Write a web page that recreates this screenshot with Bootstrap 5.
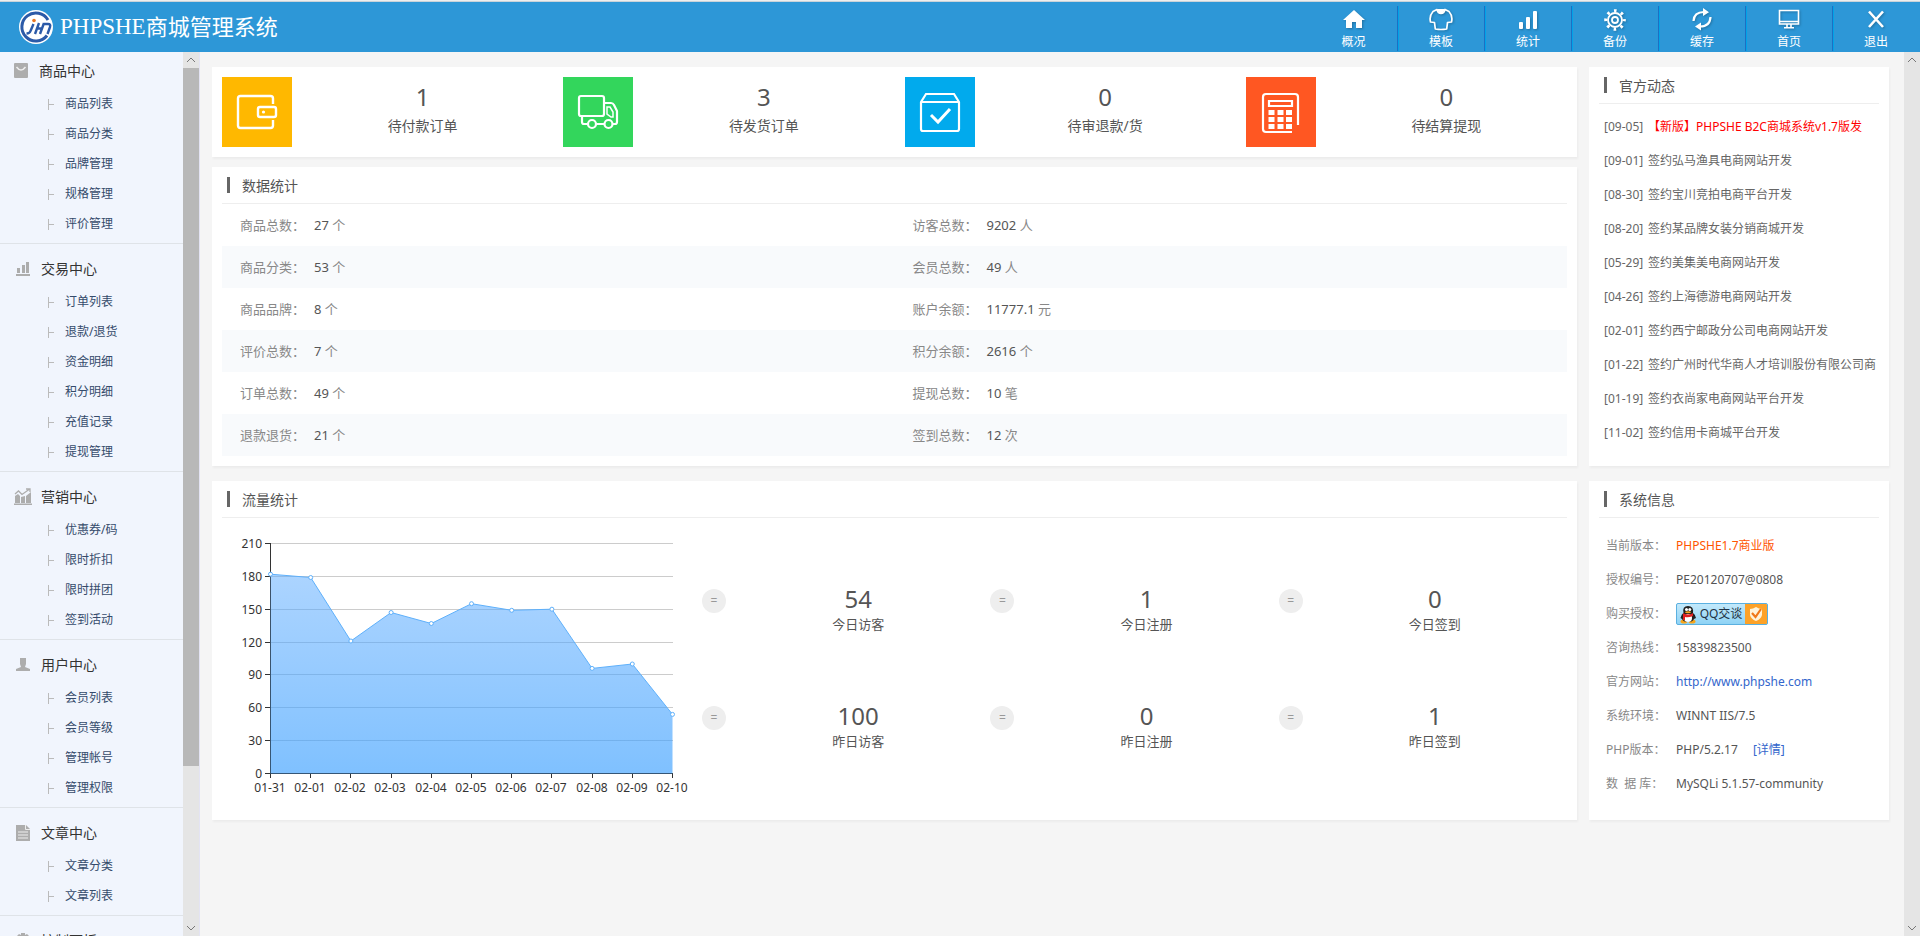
<!DOCTYPE html>
<html lang="zh-CN">
<head>
<meta charset="utf-8">
<meta name="viewport" content="width=device-width, initial-scale=1">
<title>PHPSHE商城管理系统</title>
<link href="https://cdn.jsdelivr.net/npm/bootstrap@5.3.0/dist/css/bootstrap.min.css" rel="stylesheet">
<style>
body{font-family:"Noto Sans","Noto Sans CJK SC",sans-serif;font-size:12px;color:#555;background:#f5f5f5;height:100vh;overflow:hidden}
a{text-decoration:none;color:inherit}
ul{list-style:none;margin:0;padding:0}
.topbar{height:52px;background:#2d97d7;border-top:1px solid #eee;box-shadow:inset 0 1px #c9d3da;color:#fff}
.brand{gap:6px;padding-left:18px;font-size:22px;color:#fff}
.brand b{font:400 23px "Liberation Serif",serif}
.topnav a{width:87px;margin:5px 0 4px;padding:1px 2px 0 0;line-height:18px;color:#fff}
.topnav li+li a{border-left:1px solid #00a3e8;box-shadow:-1px 0 #1c6fc4}
.topnav svg{width:26px;height:26px;filter:drop-shadow(1px 1px 1px rgba(0,0,0,.25))}
.side{width:183px;background:#f1f5fd}
.side section{padding:8px 0 5px;border-bottom:1px solid #dfe3e8}
.side section:first-child{padding-top:2px}
.side h2{font-size:14px;font-weight:400;line-height:34px;color:#333;gap:7px;padding-left:14px;margin:0}
.side h2 svg{width:20px;height:18px}
.side section:first-child h2{gap:5px}
.side li a{display:flex;align-items:center;height:30px;padding:2px 0 0 48px;color:#354b6b}
.side li a::before{content:"";width:1px;height:11px;background:#bbb}
.side li a::after{content:"";order:1;width:5px;height:1px;background:#bbb}
.side li span{order:2;margin-left:11px}
.sbar{width:16px;background:#e5e5e5}
.sbar svg{width:16px;height:16px;flex:none}
.thumb{height:79%;background:#b8b8b8;margin-bottom:auto}
.edge{border-right:1px solid #e3e3f3;width:17px}
.content{padding:15px 15px 0 12px;gap:15px}
.content>.d-flex{gap:12px}
.panel{background:#fff;box-shadow:1px 2px 2px rgba(0,0,0,.04);padding:10px 10px}
.aside{width:300px;flex:none}
.panel h3{font-size:14px;font-weight:400;line-height:16px;margin:0;padding:0 5px 10px;border-bottom:1px solid #eee}
.panel h3 span{display:block;border-left:3px solid #666;padding-left:12px;height:16px;line-height:17px}
.stats{padding:10px 0}
.tile{width:70px;height:70px;flex:none}
.big{font-size:24px;line-height:30px}
.stats .txt{font-size:14px;line-height:20px;padding-top:5px}
.stats .lbl{font-size:14px;line-height:20px;padding-top:11px}
.stats a{padding-left:10px}
.tbl{font-size:13px;margin:0;color:#555}
.tbl td{width:50%;height:42px;padding:1px 18px 0;vertical-align:middle}
.tbl span{display:inline-block;width:74px;color:#888}
.tbl tr:nth-child(even){background:#f8fafc}
.tbl i{font-style:normal;color:#888}
.news{padding-top:6px}
.news a{display:block;line-height:34px;padding-left:5px;white-space:nowrap;overflow:hidden;color:#666}
.news time{display:inline-block;width:44px}
.news b{font-weight:400;color:#f00}
.info{margin:11px 0 0;width:100%}
.info th{width:77px;height:34px;padding:0 0 0 7px;font-weight:400;color:#888;white-space:pre}
.info td{padding:0}
.info a{color:#36c}
.info .more{margin-left:12px}
.chart{width:480px;height:298px;flex:none}
.chart text{font-size:12px;fill:#333}
.flow{padding-bottom:4px}
.counts{margin-top:60px}
.counts>div{height:117px}
.eq{width:24px;height:24px;border-radius:50%;background:#eee;color:#999;flex:none;margin-top:11px}
.counts .txt{font-size:13px;line-height:20px}
.counts .big{padding-top:6px}
.qq{width:92px;height:22px;border:1px solid #5bb0e0;border-radius:2px;background:linear-gradient(#c3e9fb,#8fd3f5);overflow:hidden}
.info .qq{color:#234}
</style>
</head>
<body class="d-flex flex-column">
<header class="topbar d-flex justify-content-between flex-shrink-0">
  <a href="#" class="brand d-flex align-items-center">
    <svg width="36" height="36" viewBox="0 0 36 36"><circle cx="18" cy="18" r="17" fill="#fff"/><path d="M30 11A14 14 0 1 0 29 26.500" fill="none" stroke="#2b5aa8" stroke-width="3"/><circle cx="16" cy="11.500" r="1.800" fill="#e87722"/><path d="M15.500 15l-3 7q-.8 2.500-4 2.500M21 14l-4 11M19.500 19.500h5M26 14l-4 11M26 15h4q3 0 2 3l-2.500 7" fill="none" stroke="#2b5aa8" stroke-width="2.400"/></svg>
    <span class="d-flex align-items-center"><b>PHPSHE</b>商城管理系统</span>
  </a>
  <ul class="topnav d-flex text-center">
    <li><a href="#" class="d-flex flex-column align-items-center"><svg viewBox="0 0 26 26"><path fill="#fff" d="M13 3L2 13h3v8h6v-6h4v6h6v-8h3z"/></svg>概况</a></li>
    <li><a href="#" class="d-flex flex-column align-items-center"><svg viewBox="0 0 26 26"><path fill="none" stroke="#fff" stroke-width="1.700" stroke-linejoin="round" d="M9 2.500L5 4.500Q1 9 2.500 15l4 .5.8 6.500q5.700 1 11.400 0l.8-6.500 4-.5Q25 9 21 4.500l-4-2q-1 4-4 4t-4-4z"/><path fill="#fff" d="M9 2h8l-2 4h-4z"/></svg>模板</a></li>
    <li><a href="#" class="d-flex flex-column align-items-center"><svg viewBox="0 0 26 26"><g fill="#fff"><rect x="4" y="15" width="4" height="7" rx="1"/><rect x="11" y="10" width="4" height="12" rx="1"/><rect x="18" y="4" width="4" height="18" rx="1"/></g></svg>统计</a></li>
    <li><a href="#" class="d-flex flex-column align-items-center"><svg viewBox="0 0 26 26" fill="none" stroke="#fff"><circle cx="13" cy="13" r="7" stroke-width="1.800"/><circle cx="13" cy="13" r="3" stroke-width="1.800"/><circle cx="13" cy="13" r="9.300" stroke-width="3" stroke-dasharray="2.600 4.704" stroke-dashoffset="1.300"/></svg>备份</a></li>
    <li><a href="#" class="d-flex flex-column align-items-center"><svg viewBox="0 0 26 26"><g fill="none" stroke="#fff" stroke-width="2.200"><path d="M4.500 14Q5 5 15 5M21.500 10Q21 19.500 11 19.500"/></g><path fill="#fff" d="M14 1l6 4.200L14 9zM12 15.500L6 19.500l6 4z"/></svg>缓存</a></li>
    <li><a href="#" class="d-flex flex-column align-items-center"><svg viewBox="0 0 26 26"><path fill="none" stroke="#fff" stroke-width="1.600" d="M3.500 3.500h19V17h-19zM3.500 14.500h19M11 17v3.500M15 17v3.500M8 20.700h10"/></svg>首页</a></li>
    <li><a href="#" class="d-flex flex-column align-items-center"><svg viewBox="0 0 26 26"><path fill="none" stroke="#fff" stroke-width="2.600" d="M6 4.500L20 20M20 4.500L6 20"/></svg>退出</a></li>
  </ul>
</header>
<div class="d-flex flex-grow-1 overflow-hidden">
  <nav class="side flex-shrink-0 overflow-hidden">
    <section><h2 class="d-flex align-items-center"><svg viewBox="0 0 20 18"><rect y="1" width="14" height="15" rx="1" fill="#adadad"/><path d="M2.500 5q4.500 6 9 0" fill="none" stroke="#eee" stroke-width="1.500"/></svg>商品中心</h2>
      <ul><li><a href="#"><span>商品列表</span></a></li><li><a href="#"><span>商品分类</span></a></li><li><a href="#"><span>品牌管理</span></a></li><li><a href="#"><span>规格管理</span></a></li><li><a href="#"><span>评价管理</span></a></li></ul></section>
    <section><h2 class="d-flex align-items-center"><svg viewBox="0 0 20 18"><path fill="#adadad" d="M2 14h14v2H2zM3 8h3v5H3zM8 5h3v8H8zM12 2h3v11h-3z"/></svg>交易中心</h2>
      <ul><li><a href="#"><span>订单列表</span></a></li><li><a href="#"><span>退款/退货</span></a></li><li><a href="#"><span>资金明细</span></a></li><li><a href="#"><span>积分明细</span></a></li><li><a href="#"><span>充值记录</span></a></li><li><a href="#"><span>提现管理</span></a></li></ul></section>
    <section><h2 class="d-flex align-items-center"><svg viewBox="0 0 20 18"><path fill="#adadad" d="M0 15.500h18v1.500H0zM1 8l3-2 2 2v7H1zM7 9l4-1v7H7zM12 8l5-4v11h-5z"/><path d="M1 6l3.500-3L8 6.500 15 1.500M12 1h4v3" fill="none" stroke="#adadad" stroke-width="1.300"/></svg>营销中心</h2>
      <ul><li><a href="#"><span>优惠券/码</span></a></li><li><a href="#"><span>限时折扣</span></a></li><li><a href="#"><span>限时拼团</span></a></li><li><a href="#"><span>签到活动</span></a></li></ul></section>
    <section><h2 class="d-flex align-items-center"><svg viewBox="0 0 20 18"><path fill="#adadad" d="M6 2h6v6l-1 3 5 2v2H2v-2l5-2-1-3z"/></svg>用户中心</h2>
      <ul><li><a href="#"><span>会员列表</span></a></li><li><a href="#"><span>会员等级</span></a></li><li><a href="#"><span>管理帐号</span></a></li><li><a href="#"><span>管理权限</span></a></li></ul></section>
    <section><h2 class="d-flex align-items-center"><svg viewBox="0 0 20 18"><path fill="#adadad" d="M2 1h10l4 4v12H2z"/><path d="M4 8h10M4 11h10M4 14h10M11.500 1v4.500H16" stroke="#eee" fill="none"/></svg>文章中心</h2>
      <ul><li><a href="#"><span>文章分类</span></a></li><li><a href="#"><span>文章列表</span></a></li></ul></section>
    <section><h2 class="d-flex align-items-center"><svg viewBox="0 0 20 18"><path fill="#adadad" d="M7 1h4v2l2-1 2 2-1 2h2v5h-2l1 2-2 2-2-1v2H7v-2l-2 1-2-2 1-2H2V6h2L3 4l2-2 2 1z"/></svg>控制面板</h2></section>
  </nav>
  <div class="sbar edge d-flex flex-column flex-shrink-0"><svg viewBox="0 0 16 16"><path d="M4 10l4-4 4 4" fill="none" stroke="#777"/></svg><div class="thumb"></div><svg viewBox="0 0 16 16"><path d="M4 6l4 4 4-4" fill="none" stroke="#777"/></svg></div>
  <main class="content d-flex flex-column flex-grow-1">
    <div class="d-flex">
      <div class="d-flex flex-column flex-grow-1" style="gap:10px">
        <div class="panel stats row g-0">
          <a href="#" class="col-3 d-flex"><svg class="tile" viewBox="0 0 70 70"><path fill="#ffb800" d="M0 0h70v70H0z"/><path d="M51 27V21.500q0-2.500-2.500-2.500h-30q-2.500 0-2.500 2.500v27q0 2.500 2.500 2.500h30q2.500 0 2.500-2.500V43M38 30h14q2 0 2 2v6q0 2-2 2H38q-2 0-2-2v-6q0-2 2-2z" fill="none" stroke="#fff" stroke-width="2.400"/><circle cx="41.500" cy="35" r="1.600" fill="#fff"/></svg><div class="flex-fill text-center txt"><div class="big">1</div><div class="lbl pt-0 mt-1">待付款订单</div></div></a>
          <a href="#" class="col-3 d-flex"><svg class="tile" viewBox="0 0 70 70"><path fill="#33d65c" d="M0 0h70v70H0z"/><g fill="none" stroke="#fff" stroke-width="2.200"><rect x="16" y="19" width="25" height="20" rx="2"/><path d="M41 26h7q2 0 3 2l3 6v11q0 2-2 2h-2M42 47h-8M24 47h-3q-2 0-2-2v-6"/><circle cx="29" cy="47" r="4"/><circle cx="45.500" cy="47" r="4"/><path d="M44 30h3l3 5v5h-2l-4-3z" stroke-width="1.500"/></g></svg><div class="flex-fill text-center txt"><div class="big">3</div><div class="lbl pt-0 mt-1">待发货订单</div></div></a>
          <a href="#" class="col-3 d-flex"><svg class="tile" viewBox="0 0 70 70"><path fill="#01aaed" d="M0 0h70v70H0z"/><path d="M16 25l5-8h28l5 8v27q0 2-2 2H18q-2 0-2-2zM16 25h38" fill="none" stroke="#fff" stroke-width="2.200"/><path d="M26 38l7 7 12-13" fill="none" stroke="#fff" stroke-width="3"/></svg><div class="flex-fill text-center txt"><div class="big">0</div><div class="lbl pt-0 mt-1">待审退款/货</div></div></a>
          <a href="#" class="col-3 d-flex"><svg class="tile" viewBox="0 0 70 70"><path fill="#ff5722" d="M0 0h70v70H0z"/><path d="M52 48V20q0-3-3-3H20q-3 0-3 3v32q0 3 3 3h26M23 24h23v5H23z" fill="none" stroke="#fff" stroke-width="2.200"/><path d="M25.500 33v20M34.500 33v20M43 33v20" stroke="#fff" stroke-width="6" stroke-dasharray="5 2"/></svg><div class="flex-fill text-center txt"><div class="big">0</div><div class="lbl pt-0 mt-1">待结算提现</div></div></a>
        </div>
        <section class="panel flex-grow-1"><h3><span>数据统计</span></h3>
          <table class="tbl w-100"><tbody>
            <tr><td><span>商品总数：</span>27 <i>个</i></td><td><span>访客总数：</span>9202 <i>人</i></td></tr>
            <tr><td><span>商品分类：</span>53 <i>个</i></td><td><span>会员总数：</span>49 <i>人</i></td></tr>
            <tr><td><span>商品品牌：</span>8 <i>个</i></td><td><span>账户余额：</span>11777.1 <i>元</i></td></tr>
            <tr><td><span>评价总数：</span>7 <i>个</i></td><td><span>积分余额：</span>2616 <i>个</i></td></tr>
            <tr><td><span>订单总数：</span>49 <i>个</i></td><td><span>提现总数：</span>10 <i>笔</i></td></tr>
            <tr><td><span>退款退货：</span>21 <i>个</i></td><td><span>签到总数：</span>12 <i>次</i></td></tr>
          </tbody></table></section>
      </div>
      <section class="panel aside"><h3><span>官方动态</span></h3>
        <ul class="news">
          <li><a href="#"><time>[09-05]</time><b>【新版】PHPSHE B2C商城系统v1.7版发</b></a></li>
          <li><a href="#"><time>[09-01]</time>签约弘马渔具电商网站开发</a></li>
          <li><a href="#"><time>[08-30]</time>签约宝川竞拍电商平台开发</a></li>
          <li><a href="#"><time>[08-20]</time>签约某品牌女装分销商城开发</a></li>
          <li><a href="#"><time>[05-29]</time>签约美集美电商网站开发</a></li>
          <li><a href="#"><time>[04-26]</time>签约上海德游电商网站开发</a></li>
          <li><a href="#"><time>[02-01]</time>签约西宁邮政分公司电商网站开发</a></li>
          <li><a href="#"><time>[01-22]</time>签约广州时代华商人才培训股份有限公司商</a></li>
          <li><a href="#"><time>[01-19]</time>签约衣尚家电商网站平台开发</a></li>
          <li><a href="#"><time>[11-02]</time>签约信用卡商城平台开发</a></li>
        </ul></section>
    </div>
    <div class="d-flex">
      <section class="panel flow flex-grow-1"><h3><span>流量统计</span></h3>
        <div class="d-flex">
          <svg class="chart" viewBox="0 0 480 298">
            <defs><linearGradient id="area" x1="0" y1="0" x2="0" y2="1"><stop offset="0" stop-color="#58a9ff" stop-opacity=".5"/><stop offset="1" stop-color="#3a9fff" stop-opacity=".65"/></linearGradient></defs>
            <path d="M49 25.500h402M49 58.500h402M49 91.500h402M49 124.500h402M49 156.500h402M49 189.500h402M49 222.500h402" stroke="#ccc"/>
            <path d="M48.500 25v231M43 25.500h5M43 58.500h5M43 91.500h5M43 124.500h5M43 156.500h5M43 189.500h5M43 222.500h5M43 255.500h408M48.500 256v4M88.500 256v4M128.500 256v4M169.500 256v4M209.500 256v4M249.500 256v4M289.500 256v4M329.500 256v4M370.500 256v4M410.500 256v4M450.500 256v4" stroke="#333"/>
            <path d="M48.500 56.200L88.700 59.500 128.900 123 169.100 94.500 209.300 105.500 249.500 85.700 289.700 92.300 329.900 91.200 370.100 150.400 410.300 146 450.500 196.400V255.500H48.500z" fill="url(#area)"/>
            <path d="M48.500 56.200L88.700 59.500 128.900 123 169.100 94.500 209.300 105.500 249.500 85.700 289.700 92.300 329.900 91.200 370.100 150.400 410.300 146 450.500 196.400" fill="none" stroke="#5eb0fb"/>
            <g fill="#fff" stroke="#5eb0fb"><circle cx="48.500" cy="56.200" r="2"/><circle cx="88.700" cy="59.500" r="2"/><circle cx="128.900" cy="123" r="2"/><circle cx="169.100" cy="94.500" r="2"/><circle cx="209.300" cy="105.500" r="2"/><circle cx="249.500" cy="85.700" r="2"/><circle cx="289.700" cy="92.300" r="2"/><circle cx="329.900" cy="91.200" r="2"/><circle cx="370.100" cy="150.400" r="2"/><circle cx="410.300" cy="146" r="2"/><circle cx="450.500" cy="196.400" r="2"/></g>
            <g text-anchor="end"><text x="40" y="30">210</text><text x="40" y="63">180</text><text x="40" y="96">150</text><text x="40" y="129">120</text><text x="40" y="161">90</text><text x="40" y="194">60</text><text x="40" y="227">30</text><text x="40" y="260">0</text></g>
            <g text-anchor="middle"><text x="48" y="274">01-31</text><text x="88" y="274">02-01</text><text x="128" y="274">02-02</text><text x="168" y="274">02-03</text><text x="209" y="274">02-04</text><text x="249" y="274">02-05</text><text x="289" y="274">02-06</text><text x="329" y="274">02-07</text><text x="370" y="274">02-08</text><text x="410" y="274">02-09</text><text x="450" y="274">02-10</text></g>
          </svg>
          <div class="counts row g-0 flex-grow-1 align-content-start text-center">
            <div class="col-4 d-flex"><span class="eq d-flex align-items-center justify-content-center">=</span><div class="flex-fill"><div class="big">54</div><div class="txt">今日访客</div></div></div>
            <div class="col-4 d-flex"><span class="eq d-flex align-items-center justify-content-center">=</span><div class="flex-fill"><div class="big">1</div><div class="txt">今日注册</div></div></div>
            <div class="col-4 d-flex"><span class="eq d-flex align-items-center justify-content-center">=</span><div class="flex-fill"><div class="big">0</div><div class="txt">今日签到</div></div></div>
            <div class="col-4 d-flex"><span class="eq d-flex align-items-center justify-content-center">=</span><div class="flex-fill"><div class="big">100</div><div class="txt">昨日访客</div></div></div>
            <div class="col-4 d-flex"><span class="eq d-flex align-items-center justify-content-center">=</span><div class="flex-fill"><div class="big">0</div><div class="txt">昨日注册</div></div></div>
            <div class="col-4 d-flex"><span class="eq d-flex align-items-center justify-content-center">=</span><div class="flex-fill"><div class="big">1</div><div class="txt">昨日签到</div></div></div>
          </div>
        </div></section>
      <section class="panel aside"><h3><span>系统信息</span></h3>
        <table class="info"><tbody>
          <tr><th scope="row">当前版本：</th><td style="color:#ff5500">PHPSHE1.7商业版</td></tr>
          <tr><th scope="row">授权编号：</th><td>PE20120707@0808</td></tr>
          <tr><th scope="row">购买授权：</th><td><a href="#" class="qq d-flex align-items-center"><svg width="20" height="20" viewBox="0 0 20 20"><ellipse cx="7" cy="17.500" rx="3.500" ry="2" fill="#f8a51b"/><ellipse cx="15" cy="17.500" rx="3.500" ry="2" fill="#f8a51b"/><path d="M3.500 14q1-4 3-5Q5 2 11 2t5 7q2 1 3 5l-2 1q-1 3-6 3t-6-3z" fill="#222"/><ellipse cx="11" cy="14" rx="4" ry="4" fill="#fff"/><path d="M6 9q5 3 10 0v3q-5 2-8 1v3H6z" fill="#e02020"/><circle cx="9.500" cy="5.500" r="1.500" fill="#fff"/><circle cx="12.800" cy="5.500" r="1.500" fill="#fff"/><ellipse cx="11" cy="8.300" rx="3" ry="1" fill="#f8a51b"/></svg><span class="ms-auto">QQ交谈</span><svg class="ms-auto" width="22" height="22" viewBox="0 0 22 22"><path fill="#fda228" d="M0 0h22v22H0z"/><path fill="#fff3d8" d="M5 6q3 0 6-2 3 2 6 2v6q-1 4-6 6-5-2-6-6z"/><path d="M7 10l3.500 4L16 6" fill="none" stroke="#f07818" stroke-width="2.200"/></svg></a></td></tr>
          <tr><th scope="row">咨询热线：</th><td>15839823500</td></tr>
          <tr><th scope="row">官方网站：</th><td><a href="#">http://www.phpshe.com</a></td></tr>
          <tr><th scope="row">系统环境：</th><td>WINNT IIS/7.5</td></tr>
          <tr><th scope="row">PHP版本：</th><td>PHP/5.2.17 <a href="#" class="more">[详情]</a></td></tr>
          <tr><th scope="row">数  据 库：</th><td>MySQLi 5.1.57-community</td></tr>
        </tbody></table></section>
    </div>
  </main>
  <div class="sbar d-flex flex-column justify-content-between flex-shrink-0"><svg viewBox="0 0 16 16"><path d="M4 10l4-4 4 4" fill="none" stroke="#777"/></svg><svg viewBox="0 0 16 16"><path d="M4 6l4 4 4-4" fill="none" stroke="#777"/></svg></div>
</div>
<script src="https://cdn.jsdelivr.net/npm/bootstrap@5.3.0/dist/js/bootstrap.bundle.min.js"></script>
</body>
</html>
